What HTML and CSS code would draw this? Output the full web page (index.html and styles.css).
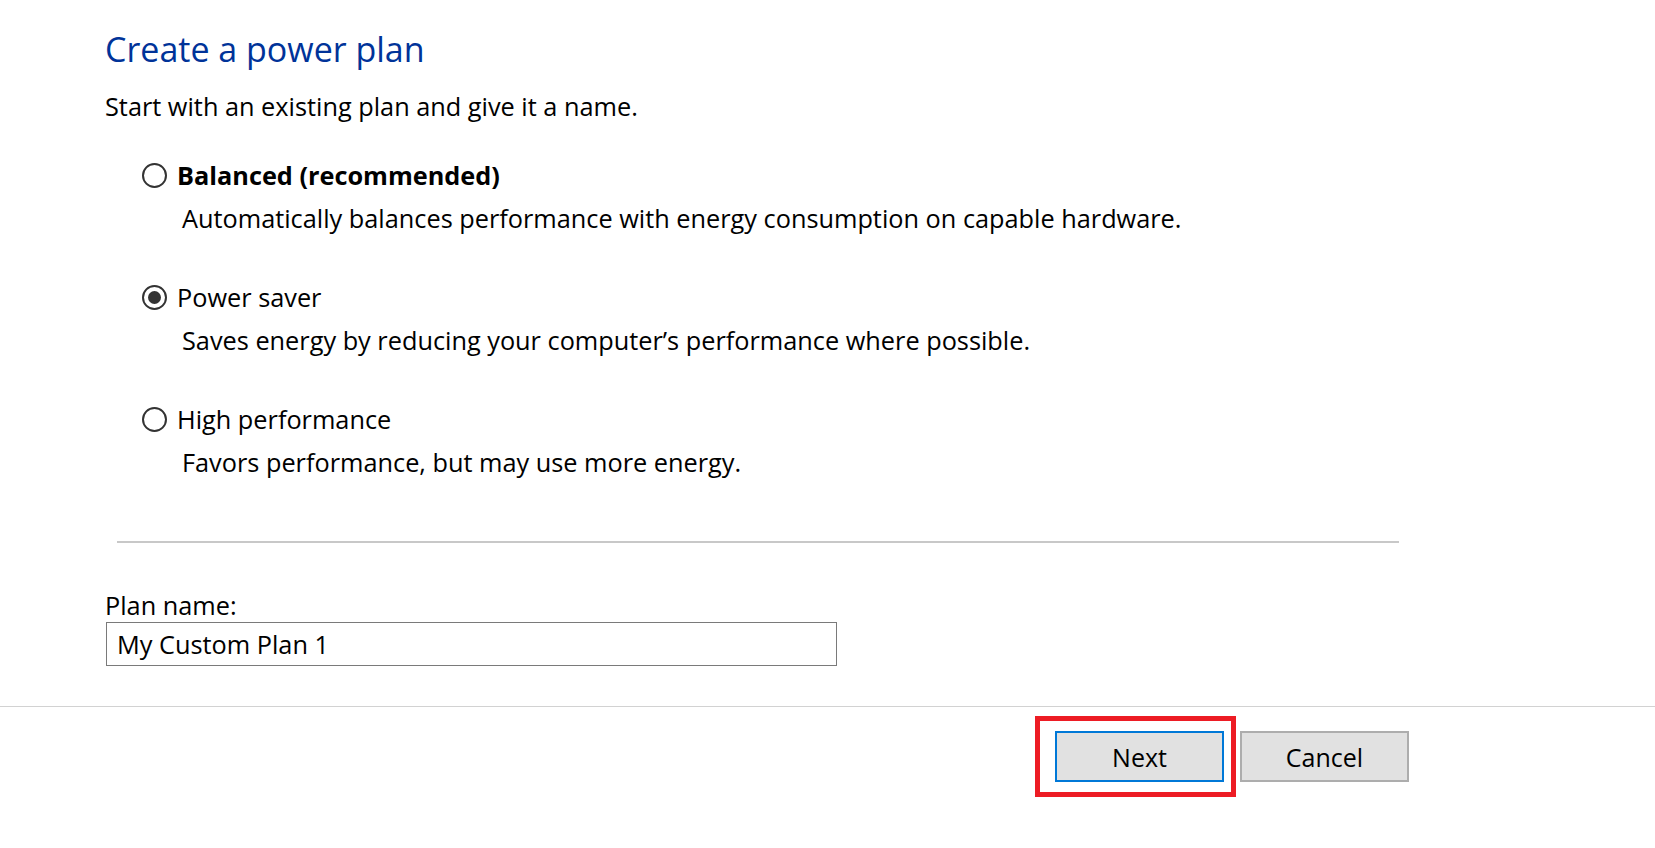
FILE: index.html
```html
<!DOCTYPE html>
<html lang="en">
<head>
<meta charset="utf-8">
<title>Create a power plan</title>
<link rel="stylesheet" href="styles.css">
</head>
<body>
<div class="page">
  <h1 class="title">Create a power plan</h1>
  <p class="intro">Start with an existing plan and give it a name.</p>

  <div class="options">
    <div class="option">
      <div class="option-row">
        <span class="radio"></span>
        <span class="option-label bold">Balanced (recommended)</span>
      </div>
      <p class="desc">Automatically balances performance with energy consumption on capable hardware.</p>
    </div>
    <div class="option">
      <div class="option-row">
        <span class="radio checked"></span>
        <span class="option-label">Power saver</span>
      </div>
      <p class="desc">Saves energy by reducing your computer’s performance where possible.</p>
    </div>
    <div class="option">
      <div class="option-row">
        <span class="radio"></span>
        <span class="option-label">High performance</span>
      </div>
      <p class="desc">Favors performance, but may use more energy.</p>
    </div>
  </div>

  <div class="divider"></div>

  <div class="name-field">
    <div class="name-label">Plan name:</div>
    <div class="name-input">My Custom Plan 1</div>
  </div>
</div>

<div class="footer">
  <span class="btn-wrap highlighted"><span class="btn primary">Next</span></span>
  <span class="btn">Cancel</span>
</div>
</body>
</html>
```

FILE: styles.css
```css
html, body {
  margin: 0;
  padding: 0;
  background: #ffffff;
}

body {
  font-family: "Open Sans", "Noto Sans", "Liberation Sans", sans-serif;
  color: #000000;
  font-size: 25.3px;
  line-height: 32px;
}

.page {
  padding: 29px 0 0 105px;
}

.title {
  margin: 0;
  font-size: 34px;
  line-height: 40px;
  font-weight: 400;
  color: #003399;
}

.intro {
  margin: 21px 0 0 0;
}

.options {
  margin: 37px 0 0 37px;
  display: flex;
  flex-direction: column;
  gap: 47px;
}

.option-row {
  display: flex;
  align-items: center;
  gap: 10px;
  height: 32px;
}

.radio {
  box-sizing: border-box;
  width: 25px;
  height: 25px;
  border: 2px solid #333333;
  border-radius: 50%;
  display: flex;
  align-items: center;
  justify-content: center;
  flex: none;
}

.radio.checked::before {
  content: "";
  width: 13px;
  height: 13px;
  border-radius: 50%;
  background: #333333;
}

.bold {
  font-weight: 700;
}

.desc {
  margin: 11px 0 0 40px;
}

.divider {
  margin: 63px 0 0 12px;
  width: 1282px;
  height: 2px;
  background: #c8c8c8;
}

.name-field {
  margin-top: 46px;
}

.name-label {
  height: 32px;
}

.name-input {
  box-sizing: border-box;
  margin: 1px 0 0 1px;
  width: 731px;
  height: 44px;
  border: 1px solid #7a7a7a;
  padding: 5px 10px;
}

.footer {
  margin-top: 40px;
  border-top: 1px solid #d2d2d2;
  padding: 24px 246px 50px 0;
  display: flex;
  justify-content: flex-end;
  gap: 16px;
}

.btn-wrap {
  position: relative;
  display: flex;
}

.btn {
  box-sizing: border-box;
  width: 169px;
  height: 51px;
  background: #e1e1e1;
  border: 2px solid #adadad;
  display: flex;
  align-items: center;
  justify-content: center;
  font-size: 25px;
}

.btn.primary {
  border-color: #0078d7;
}

.highlighted::after {
  content: "";
  position: absolute;
  top: -15px;
  left: -20px;
  right: -12px;
  bottom: -15px;
  border: 5px solid #ed1c24;
}
```
